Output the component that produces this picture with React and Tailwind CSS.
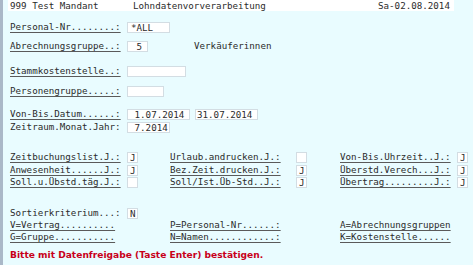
import React from 'react';

const mono = { fontFamily: '"DejaVu Sans Mono", "Liberation Mono", monospace' };

const Label = ({ text, u = true, w = 'w-[117px]' }) => (
  <span
    className={`${w} shrink-0 whitespace-pre ${u ? 'underline decoration-[#5a5a5a] underline-offset-[2px]' : ''}`}
  >
    {text}
  </span>
);

const Box = ({ value = '', w, className = 'pl-[3px]' }) => (
  <span
    className={`${w} h-[11px] shrink-0 bg-white border border-[#d3dde3] whitespace-pre leading-[9px] ${className}`}
  >
    {value}
  </span>
);

const Row = ({ children, className = '' }) => (
  <div className={`flex items-center h-[12px] ${className}`}>{children}</div>
);

const Check = ({ label, value, lw, gap }) => (
  <div className={`flex items-center ${gap}`}>
    <Label text={label} w={lw} />
    <Box value={value} w="w-[11px]" className="pl-[2px]" />
  </div>
);

export default function App() {
  return (
    <div
      className="w-[473px] h-[265px] bg-[#e9fcff] border-l-[3px] border-[#aab8c8] overflow-hidden text-[9.2px] text-[#2b2b2b]"
      style={mono}
    >
      {/* header */}
      <div className="ml-[5px] w-[446px] h-[11px] bg-white pl-[2px] leading-[11px] flex whitespace-pre">
        <span className="w-[123px]">999 Test Mandant</span>
        <span className="w-[245px]">Lohndatenvorverarbeitung</span>
        <span>Sa-02.08.2014</span>
      </div>

      <div className="pl-[7px]">
        <Row className="mt-[10px]">
          <Label text="Personal-Nr........:" />
          <Box value="*ALL" w="w-[43px]" />
        </Row>
        <Row className="mt-[7px]">
          <Label text="Abrechnungsgruppe..:" />
          <Box value="5" w="w-[21px]" className="text-right pr-[5px]" />
          <span className="ml-[46px]">Verkäuferinnen</span>
        </Row>
        <Row className="mt-[13px]">
          <Label text="Stammkostenstelle..:" />
          <Box w="w-[59px]" />
        </Row>
        <Row className="mt-[8px]">
          <Label text="Personengruppe.....:" />
          <Box w="w-[37px]" />
        </Row>
        <Row className="mt-[11px]">
          <Label text="Von-Bis.Datum......:" />
          <Box value=" 1.07.2014" w="w-[63px]" className="pl-[1px]" />
          <Box value="31.07.2014" w="w-[63px]" className="ml-[5px] pl-[1px]" />
        </Row>
        <Row className="mt-[1px]">
          <Label text="Zeitraum.Monat.Jahr:" u={false} />
          <Box value=" 7.2014" w="w-[43px]" className="pl-[1px]" />
        </Row>

        <div className="mt-[18px] flex flex-col">
          <Row>
            <Check label="Zeitbuchungslist.J.:" value="J" lw="w-[117px]" gap="w-[160px]" />
            <Check label="Urlaub.andrucken.J.:" value="" lw="w-[126px]" gap="w-[170px]" />
            <Check label="Von-Bis.Uhrzeit..J.:" value="J" lw="w-[117px]" gap="" />
          </Row>
          <Row className="mt-[1px]">
            <Check label="Anwesenheit......J.:" value="J" lw="w-[117px]" gap="w-[160px]" />
            <Check label="Bez.Zeit.drucken.J.:" value="J" lw="w-[126px]" gap="w-[170px]" />
            <Check label="Überstd.Verech...J.:" value="J" lw="w-[117px]" gap="" />
          </Row>
          <Row>
            <Check label="Soll.u.Übstd.täg.J.:" value="" lw="w-[117px]" gap="w-[160px]" />
            <Check label="Soll/Ist.Üb-Std..J.:" value="J" lw="w-[126px]" gap="w-[170px]" />
            <Check label="Übertrag.........J.:" value="J" lw="w-[117px]" gap="" />
          </Row>
        </div>

        <Row className="mt-[19px]">
          <Label text="Sortierkriterium...:" u={false} />
          <Box value="N" w="w-[11px]" className="pl-[2px]" />
        </Row>
        <div className="flex h-[12px] items-center">
          <Label text="V=Vertrag.........." w="w-[160px]" />
          <Label text="P=Personal-Nr......:" w="w-[170px]" />
          <Label text="A=Abrechnungsgruppen" w="" />
        </div>
        <div className="flex h-[11px] items-center">
          <Label text="G=Gruppe..........." w="w-[160px]" />
          <Label text="N=Namen............:" w="w-[170px]" />
          <Label text="K=Kostenstelle......" w="" />
        </div>

        <div
          className="mt-[7px] text-[9.1px] font-bold text-[#c8001a] leading-[12px]"
          style={{ fontFamily: '"DejaVu Sans", Verdana, sans-serif' }}
        >
          Bitte mit Datenfreigabe (Taste Enter) bestätigen.
        </div>
      </div>
    </div>
  );
}
